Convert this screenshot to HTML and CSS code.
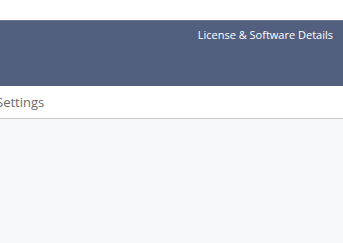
FILE: index.html
```html
<!DOCTYPE html>
<html lang="en">
<head>
    <meta charset="UTF-8">
    <meta name="viewport" content="width=device-width, initial-scale=1.0">
    <title>Settings</title>
    <link rel="stylesheet" href="styles.css">
</head>
<body>
    <div class="topstrip"></div>
    <div class="banner">
        <a class="banner-link" href="#">License &amp; Software Details</a>
    </div>
    <div class="tabbar">
        <span class="tabtitle">Settings</span>
    </div>
    <div class="content"></div>
</body>
</html>
```
FILE: styles.css
```css
* {
    margin: 0;
    padding: 0;
    box-sizing: border-box;
}

body {
    font-family: 'Open Sans', sans-serif;
    background: #f7f8fa;
    height: 100vh;
    overflow: hidden;
}

.topstrip {
    height: 20px;
    background: #ffffff;
}

.banner {
    height: 66px;
    background: #535f7e;
    border-top: 1px solid #6a7591;
    display: flex;
    justify-content: flex-end;
    align-items: flex-start;
    padding: 6px 10px 0 0;
}

.banner-link {
    color: #ffffff;
    font-size: 11px;
    line-height: 16px;
    text-decoration: none;
}

.tabbar {
    height: 33px;
    background: #ffffff;
    border-bottom: 1px solid #c6c6c6;
    display: flex;
    align-items: center;
}

.tabtitle {
    margin-left: -4px;
    font-size: 13px;
    color: #6b6b6b;
}

.content {
    flex: 1;
}
```
